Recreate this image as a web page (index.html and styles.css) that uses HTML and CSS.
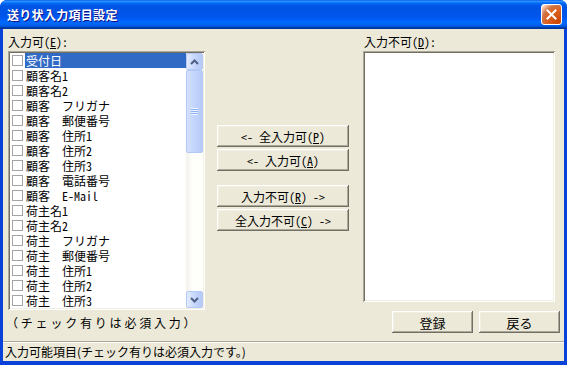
FILE: index.html
```html
<!DOCTYPE html>
<html lang="ja">
<head>
    <meta charset="UTF-8" />
    <title>送り状入力項目設定</title>
    <link rel="stylesheet" href="styles.css">
</head>
<body>
<div class="window">
    <div class="titlebar">
        <span class="title">送り状入力項目設定</span>
        <span class="close">
            <svg width="11" height="11" viewBox="0 0 11 11">
                <path d="M1.5 1.5 L9.5 9.5 M9.5 1.5 L1.5 9.5" stroke="#fff" stroke-width="2" stroke-linecap="square" />
            </svg>
        </span>
    </div>
    <div class="client">
        <div class="main">
            <div class="col-left">
                <div class="label">入力可(<u>E</u>):</div>
                <div class="listbox list-left">
                    <ul class="items">
                        <li class="item selected"><span class="check"></span><span class="text">受付日</span></li>
                        <li class="item"><span class="check"></span><span class="text">顧客名1</span></li>
                        <li class="item"><span class="check"></span><span class="text">顧客名2</span></li>
                        <li class="item"><span class="check"></span><span class="text">顧客　フリガナ</span></li>
                        <li class="item"><span class="check"></span><span class="text">顧客　郵便番号</span></li>
                        <li class="item"><span class="check"></span><span class="text">顧客　住所1</span></li>
                        <li class="item"><span class="check"></span><span class="text">顧客　住所2</span></li>
                        <li class="item"><span class="check"></span><span class="text">顧客　住所3</span></li>
                        <li class="item"><span class="check"></span><span class="text">顧客　電話番号</span></li>
                        <li class="item"><span class="check"></span><span class="text">顧客　E-Mail</span></li>
                        <li class="item"><span class="check"></span><span class="text">荷主名1</span></li>
                        <li class="item"><span class="check"></span><span class="text">荷主名2</span></li>
                        <li class="item"><span class="check"></span><span class="text">荷主　フリガナ</span></li>
                        <li class="item"><span class="check"></span><span class="text">荷主　郵便番号</span></li>
                        <li class="item"><span class="check"></span><span class="text">荷主　住所1</span></li>
                        <li class="item"><span class="check"></span><span class="text">荷主　住所2</span></li>
                        <li class="item"><span class="check"></span><span class="text">荷主　住所3</span></li>
                    </ul>
                    <div class="scrollbar">
                        <div class="sb-btn">
                            <svg width="9" height="6" viewBox="0 0 9 6"><path d="M1 5 L4.5 1.5 L8 5" fill="none" stroke="#4D6185" stroke-width="2" /></svg>
                        </div>
                        <div class="sb-btn sb-thumb"><span class="grip"></span></div>
                        <div class="sb-track"></div>
                        <div class="sb-btn">
                            <svg width="9" height="6" viewBox="0 0 9 6"><path d="M1 1 L4.5 4.5 L8 1" fill="none" stroke="#4D6185" stroke-width="2" /></svg>
                        </div>
                    </div>
                </div>
                <div class="note">（チェック有りは必須入力）</div>
            </div>

            <div class="col-mid">
                <div class="btn-group">
                    <button class="btn">&lt;- 全入力可(<u>P</u>)</button>
                    <button class="btn">&lt;- 入力可(<u>A</u>)</button>
                </div>
                <div class="btn-group">
                    <button class="btn">入力不可(<u>R</u>) -&gt;</button>
                    <button class="btn">全入力不可(<u>C</u>) -&gt;</button>
                </div>
            </div>

            <div class="col-right">
                <div class="label label-right">入力不可(<u>D</u>):</div>
                <div class="listbox list-right"></div>
                <div class="actions">
                    <button class="btn btn-action">登録</button>
                    <button class="btn btn-action">戻る</button>
                </div>
            </div>
        </div>
        <div class="statusbar">入力可能項目(チェック有りは必須入力です。)</div>
    </div>
</div>
</body>
</html>
```

FILE: styles.css
```css
body {
    margin: 0;
    padding: 0;
    font-family: "Noto Sans CJK JP", sans-serif;
    font-size: 12px;
    color: #000;
}

.window {
    width: 567px;
    height: 365px;
    display: flex;
    flex-direction: column;
    background-color: #0842D8;
    border-radius: 7px 7px 0 0;
    overflow: hidden;
}

.titlebar {
    height: 29px;
    flex-shrink: 0;
    display: flex;
    align-items: center;
    justify-content: space-between;
    padding: 0 5px 0 7px;
    background: linear-gradient(to bottom, #0058EE 0%, #3593FF 4%, #288EFF 6%, #127DFF 8%, #036FFC 10%, #0262EE 14%, #0057E5 20%, #0054E3 24%, #0055EB 56%, #005BF5 66%, #026AFE 76%, #0062EF 86%, #0052D6 92%, #0040AB 94%, #003092 100%);
}

.title {
    color: #fff;
    font-weight: bold;
    font-size: 12px;
    letter-spacing: 0.3px;
    text-shadow: 1px 1px #0F1089;
}

.close {
    width: 21px;
    height: 21px;
    box-sizing: border-box;
    border: 1px solid #fff;
    border-radius: 3px;
    display: flex;
    align-items: center;
    justify-content: center;
    background: radial-gradient(circle at 90% 90%, #CC4600 0%, #DC6527 55%, #CD7546 70%, #FFCCB2 90%, #fff 100%);
}

.client {
    flex: 1;
    margin: 0 3px 4px 3px;
    background-color: #ECE9D8;
    display: flex;
    flex-direction: column;
}

.main {
    flex: 1;
    display: flex;
    padding: 5px 0 0 5px;
}

.label {
    height: 15px;
    line-height: 15px;
    margin-bottom: 2px;
    font-family: "Noto Sans Mono CJK JP", "Noto Sans CJK JP", monospace;
}

.label-right {
    padding-left: 1px;
}

.listbox {
    box-sizing: border-box;
    padding: 2px;
    background-color: #fff;
    box-shadow: inset 1px 1px #ACA899, inset -1px -1px #FFFFFF, inset 2px 2px #716F64, inset -2px -2px #F1EFE2;
}

/* left column */
.col-left {
    width: 197px;
    display: flex;
    flex-direction: column;
}

.list-left {
    height: 259px;
    display: flex;
}

.items {
    flex: 1;
    list-style: none;
    margin: 0;
    padding: 0;
    overflow: hidden;
    font-family: "Noto Sans Mono CJK JP", "Noto Sans CJK JP", monospace;
}

.item {
    height: 15px;
    display: flex;
    align-items: center;
}

.check {
    width: 11px;
    height: 11px;
    box-sizing: border-box;
    border: 1px solid #A4A4A4;
    background-color: #fff;
    margin: 0 2px 0 2px;
    flex-shrink: 0;
}

.text {
    flex: 1;
    height: 15px;
    line-height: 15px;
    padding-left: 1px;
    white-space: nowrap;
}

.item.selected .text {
    background-color: #316AC5;
    color: #fff;
}

.scrollbar {
    width: 17px;
    display: flex;
    flex-direction: column;
    background: linear-gradient(to right, #F3F1EC, #FEFEFB 40%);
}

.sb-btn {
    height: 17px;
    box-sizing: border-box;
    border: 1px solid #B4C8F6;
    border-radius: 2px;
    background: linear-gradient(to right, #E3EBFE, #C1D3FB 60%, #B6CAF6);
    display: flex;
    align-items: center;
    justify-content: center;
    flex-shrink: 0;
}

.sb-thumb {
    height: 83px;
    background: linear-gradient(to right, #D4E1FD, #C3D4FC 50%, #B7CBF8);
}

.grip {
    width: 7px;
    height: 7px;
    background: repeating-linear-gradient(to bottom, #EEF4FE 0, #EEF4FE 1px, #8CB0F8 1px, #8CB0F8 2px);
}

.sb-track {
    flex: 1;
}

.note {
    margin-top: 6px;
    margin-left: -2px;
    line-height: 14px;
    letter-spacing: 2.8px;
    white-space: nowrap;
}

/* middle column */
.col-mid {
    width: 132px;
    margin-left: 12px;
    padding-top: 91px;
    display: flex;
    flex-direction: column;
}

.btn-group {
    display: flex;
    flex-direction: column;
    gap: 2px;
    margin-bottom: 14px;
}

.btn {
    height: 22px;
    width: 100%;
    padding: 0;
    border: none;
    background-color: #ECE9D8;
    color: #000;
    font-family: "Noto Sans Mono CJK JP", "Noto Sans CJK JP", monospace;
    font-size: 12px;
    box-shadow: inset -1px -1px #716F64, inset 1px 1px #FFFFFF, inset -2px -2px #ACA899, inset 2px 2px #F1EFE2;
}

/* right column */
.col-right {
    width: 197px;
    margin-left: 14px;
    display: flex;
    flex-direction: column;
}

.list-right {
    width: 192px;
    height: 251px;
}

.actions {
    margin-top: 9px;
    display: flex;
    justify-content: flex-end;
    gap: 6px;
}

.btn-action {
    width: 81px;
    font-family: "Noto Sans CJK JP", sans-serif;
    font-size: 13px;
}

.statusbar {
    height: 20px;
    box-sizing: border-box;
    border-top: 1px solid #ACA899;
    box-shadow: inset 0 1px #fff;
    line-height: 19px;
    padding-left: 2px;
    white-space: nowrap;
}
```
